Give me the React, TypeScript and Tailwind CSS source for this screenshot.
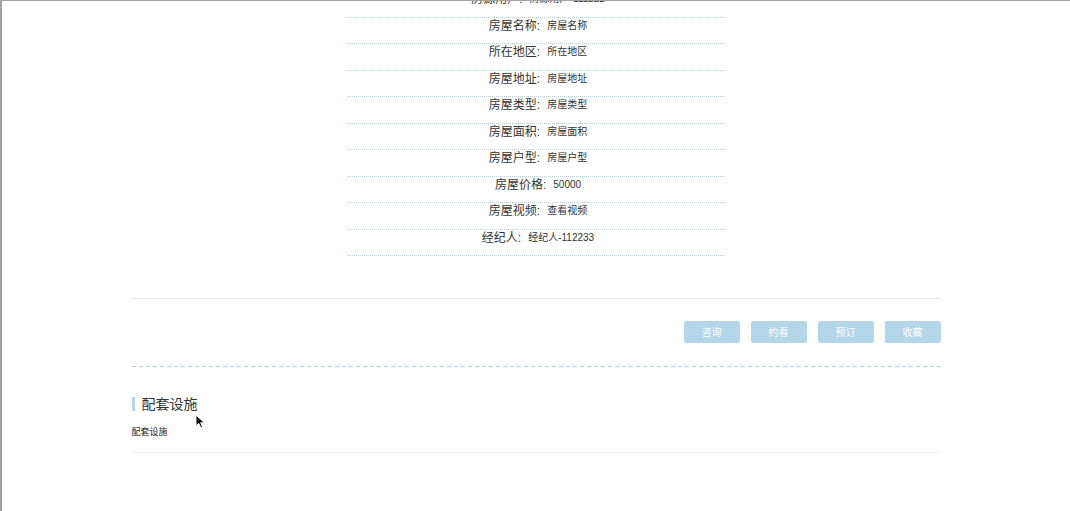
const rows: [string, string][] = [
  ["房源用户", "房源用户-111222"],
  ["房屋名称", "房屋名称"],
  ["所在地区", "所在地区"],
  ["房屋地址", "房屋地址"],
  ["房屋类型", "房屋类型"],
  ["房屋面积", "房屋面积"],
  ["房屋户型", "房屋户型"],
  ["房屋价格", "50000"],
  ["房屋视频", "查看视频"],
  ["经纪人", "经纪人-112233"],
];

const actions = ["咨询", "约看", "预订", "收藏"];

const DetailRow = ({ label, value }: { label: string; value: string }) => (
  <div className="flex h-[26.5px] items-start justify-center gap-[7px] border-b border-dotted border-[#b9cfd8] pl-[4px]">
    <span className="text-[12px] leading-4 text-[#333]">{label}:</span>
    <span className="pt-[2px] text-[10px] leading-[11px] text-[#333]">{value}</span>
  </div>
);

export default function App() {
  return (
    <div
      className="relative min-h-screen overflow-hidden border-t border-l-2 border-[#a3a3a3] bg-white"
      style={{ fontFamily: '"Liberation Sans", "Noto Sans CJK SC", sans-serif' }}
    >
      <div className="mx-auto w-[809px]">
        {/* house details table */}
        <div className="mx-auto -mt-[10px] w-[377px]">
          {rows.map(([label, value]) => (
            <DetailRow key={label} label={label} value={value} />
          ))}
        </div>

        <div className="mt-[42px] border-t border-[#e8e8e8]" />

        {/* action buttons */}
        <div className="flex justify-end gap-[11px] pt-[22px]">
          {actions.map((a) => (
            <button
              key={a}
              className="h-[22px] w-[56px] rounded-[2px] bg-[#b4d6e9] text-[10px] text-white"
            >
              {a}
            </button>
          ))}
        </div>

        <div className="mt-[23px] h-px bg-[linear-gradient(to_right,#a9cfe6_4px,transparent_4px)] bg-[length:7px_1px]" />

        {/* facilities */}
        <div className="mt-[30px] flex items-center gap-[7px]">
          <span className="h-[14px] w-[3px] bg-[#b4d6e9]" />
          <h3 className="text-[14px] leading-[14px] text-[#333]">配套设施</h3>
        </div>
        <p className="mt-[15px] text-[9px] leading-[12px] text-[#222]">配套设施</p>
        <div className="mt-[14px] border-t border-[#f2f2f2]" />
      </div>

      {/* mouse pointer */}
      <svg className="absolute left-[193px] top-[413px]" width="11" height="15" viewBox="0 0 11 15">
        <path d="M1 1 L1 12 L3.8 9.4 L5.8 13.8 L7.6 13 L5.7 8.8 L9.5 8.8 Z" fill="#000" stroke="#fff" strokeWidth="1" />
      </svg>
    </div>
  );
}
